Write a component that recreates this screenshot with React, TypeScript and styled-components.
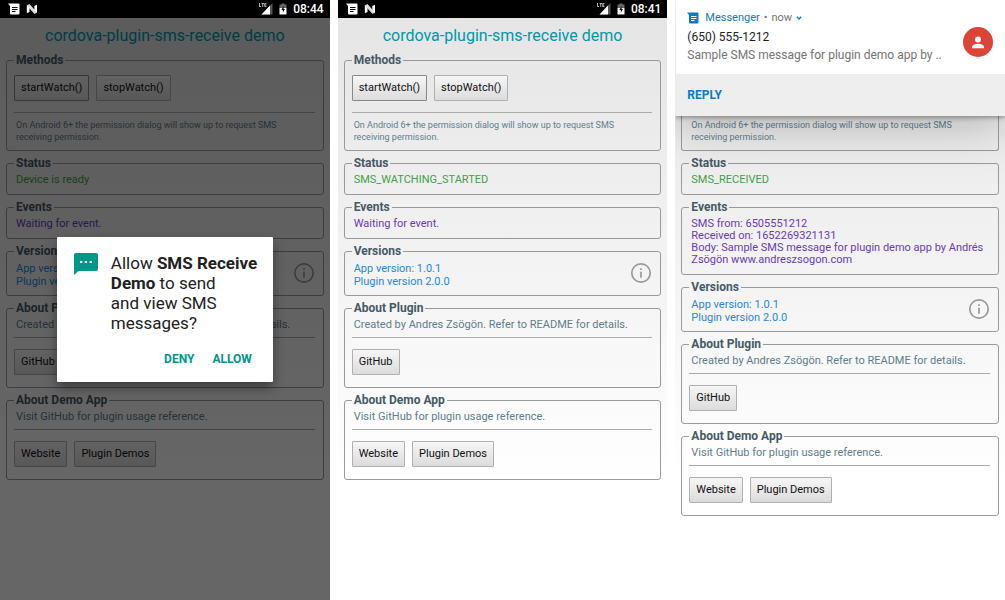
import React from "react";
import styled, { createGlobalStyle } from "styled-components";

const GlobalStyle = createGlobalStyle`
  *, *::before, *::after { box-sizing: border-box; }
  body {
    margin: 0;
    background: #fff;
    font-family: Roboto, "Liberation Sans", sans-serif;
    font-size: 11px;
    line-height: 12px;
  }
`;

const Screens = styled.main`
  display: grid;
  grid-template-columns: repeat(3, minmax(0, 1fr));
  gap: 8px;
  min-height: 100vh;
`;

const Screen = styled.section`
  position: relative;
  display: flex;
  flex-direction: column;
  background: linear-gradient(#e4e4e4, #fff 480px);
`;

const StatusBar = styled.header`
  display: flex;
  align-items: center;
  gap: 6px;
  height: 18px;
  padding: 0 6px 0 8px;
  background: #000;
  color: #fff;
`;

const Clock = styled.time`
  font-size: 12px;
  font-weight: 500;
`;

const Spacer = styled.span`
  flex: 1;
`;

const Content = styled.div`
  position: relative;
  flex: 1;
`;

const Title = styled.h1`
  margin: 0;
  padding: 8px 0;
  color: #0097a7;
  font-size: 16px;
  font-weight: 400;
  line-height: 20px;
  text-align: center;
`;

const Groups = styled.div`
  display: flex;
  flex-direction: column;
  gap: 6px;
  padding: 0 6px;
`;

const Group = styled.fieldset`
  min-width: 0;
  margin: 0;
  padding: 0 8px 0 7px;
  border: 1px solid #999;
  border-radius: 3px;
`;

const OpenGroup = styled(Group)`
  border-top: 0;
  border-radius: 0 0 3px 3px;
`;

const Legend = styled.legend`
  padding: 0 2px;
  color: #455a64;
  font-size: 12px;
  font-weight: 700;
  line-height: 13px;
`;

const Message = styled.p<{ $color: string }>`
  margin: 0;
  padding: 4px 2px 8px;
  color: ${(p) => p.$color};
  white-space: pre-line;
`;

const VersionRow = styled.div`
  display: flex;
  align-items: flex-start;
  justify-content: space-between;
  padding: 4px 0 7px 2px;
  color: #1e88e5;
  line-height: 13px;
`;

const Description = styled.p`
  margin: 0;
  padding: 4px 2px 6px;
  color: #607d8b;
`;

const Note = styled.p<{ $tight?: boolean }>`
  margin: 0;
  padding: ${(p) => (p.$tight ? "3px" : "6px")} 2px 7px;
  color: #607d8b;
  font-size: 9px;
`;

const Rule = styled.hr`
  height: 1px;
  margin: 0;
  border: 0;
  background: #aaa;
`;

const Buttons = styled.div<{ $first?: boolean }>`
  display: flex;
  gap: 7px;
  padding: ${(p) => (p.$first ? "8px 0 11px" : "11px 0 12px")};
`;

const Button = styled.button<{ $active?: boolean }>`
  height: 26px;
  padding: 0 6px;
  border: 1px solid ${(p) => (p.$active ? "#888" : "#b0b0b0")};
  border-radius: 1px;
  background: linear-gradient(#f6f6f6, #dcdcdc);
  color: #111;
  font: 400 11px/16px Roboto, sans-serif;
`;

const Scrim = styled.div`
  position: absolute;
  inset: 0;
  display: flex;
  align-items: center;
  justify-content: center;
  background: rgba(0, 0, 0, 0.6);
`;

const Dialog = styled.div`
  width: 216px;
  padding: 16px 13px 13px 17px;
  border-radius: 1px;
  background: #fff;
  box-shadow: 0 6px 12px rgba(0, 0, 0, 0.4);
`;

const DialogBody = styled.div`
  display: flex;
  align-items: flex-start;
  gap: 13px;
`;

const DialogText = styled.p`
  margin: 0;
  color: #212121;
  font-size: 17px;
  line-height: 20px;
  white-space: nowrap;
`;

const DialogActions = styled.div`
  display: flex;
  justify-content: flex-end;
  gap: 2px;
  padding-top: 16px;
`;

const FlatButton = styled.button`
  padding: 0 8px;
  border: 0;
  background: none;
  color: #009688;
  font: 700 12px/20px Roboto, sans-serif;
`;

const Notification = styled.aside`
  position: relative;
  z-index: 1;
  background: #fff;
  box-shadow: 0 2px 4px rgba(0, 0, 0, 0.3), 0 8px 50px rgba(0, 0, 0, 0.25);
  clip-path: inset(0 0 -80px 0);
`;

const NotificationBody = styled.div`
  display: flex;
  align-items: center;
  justify-content: space-between;
  height: 74px;
  padding: 10px 12px 0;
`;

const NotificationText = styled.div`
  align-self: flex-start;
`;

const Source = styled.div`
  display: flex;
  align-items: center;
  gap: 4px;
  height: 16px;
  color: #757575;
`;

const AppName = styled.span`
  padding-left: 2px;
  color: #0a7cc4;
`;

const Sender = styled.h2`
  margin: 0;
  padding-top: 2px;
  color: #212121;
  font-size: 12px;
  font-weight: 400;
  line-height: 18px;
`;

const Preview = styled.p`
  margin: 0;
  color: #757575;
  font-size: 12px;
  line-height: 18px;
  white-space: nowrap;
`;

const ReplyBar = styled.div`
  display: flex;
  align-items: center;
  height: 42px;
  padding: 0 12px;
  background: #eee;
`;

const Reply = styled.button`
  padding: 0;
  border: 0;
  background: none;
  color: #0a7cc4;
  font: 700 12px/20px Roboto, sans-serif;
`;

const MessengerIcon = ({ color, lines }: { color: string; lines: string }) => (
  <svg width="12" height="12" viewBox="0 0 12 12" aria-hidden="true">
    <path d="M0 .5h10.500a1 1 0 0 1 1 1v9a1 1 0 0 1-1 1H3a1 1 0 0 1-1-1V3z" fill={color} />
    <path d="M4 4.500h5.500M4 6.500h5.500M4 8.500h3.500" stroke={lines} strokeWidth="1" />
  </svg>
);

const NougatIcon = () => (
  <svg width="12" height="10" viewBox="0 0 12 10" aria-hidden="true">
    <path d="M.8 9.300V1.500H3.500V8z" fill="#fff" />
    <path d="M8.300 2L11 .7V8.500H8.300z" fill="#fff" />
    <path d="M.8 1.500L3.500 0 11 8.500 8.500 10z" fill="#ddd" />
  </svg>
);

const SignalIcon = () => (
  <svg width="14" height="12" viewBox="0 0 14 12" aria-hidden="true">
    <path d="M13.500 0v11.500H2.500z" fill="#555" />
    <path d="M11 2.600v8.900H2.500z" fill="#fff" />
    <path d="M.5 0v3.500H2M2.500.5h2.500M3.750.5v3.500M7.500.5H5.750v3H7.500M5.750 2h1.500" stroke="#ddd" strokeWidth=".8" fill="none" />
  </svg>
);

const BatteryIcon = () => (
  <svg width="8" height="12" viewBox="0 0 8 12" aria-hidden="true">
    <path d="M.5 1.500h2V.5h3v1h2V5h-7z" fill="#666" />
    <path d="M.5 5h7v6.500h-7z" fill="#fff" />
    <path d="M4.600 3L2.400 7h1.500v2.600L5.900 6H4.600z" fill="#000" />
  </svg>
);

const InfoIcon = () => (
  <svg width="22" height="22" viewBox="0 0 22 22" role="img" aria-label="Info">
    <circle cx="11" cy="11" r="9.200" fill="none" stroke="#999" strokeWidth="1.700" />
    <path d="M11 9.800v6M11 6.200v1.800" stroke="#999" strokeWidth="1.700" />
  </svg>
);

const SmsIcon = () => (
  <svg width="24" height="24" viewBox="0 0 24 24" aria-hidden="true">
    <path d="M2 0h20a2 2 0 0 1 2 2v14a2 2 0 0 1-2 2H4.500L0 22V2a2 2 0 0 1 2-2z" fill="#009688" />
    <path d="M6 8h2.300v2H6zM10.800 8h2.300v2h-2.300zM15.600 8h2.300v2h-2.300z" fill="#fff" />
  </svg>
);

const Avatar = () => (
  <svg width="30" height="30" viewBox="0 0 30 30" aria-hidden="true">
    <circle cx="15" cy="15" r="15" fill="#db4437" />
    <circle cx="15" cy="12.500" r="3" fill="#fff" />
    <path d="M9 21.300v-1.500c0-2 4-3.100 6-3.100s6 1.100 6 3.100v1.500z" fill="#fff" />
  </svg>
);

const Chevron = () => (
  <svg width="6" height="6" viewBox="0 0 6 6" aria-hidden="true">
    <path d="M.8 1.800L3 4l2.200-2.200" stroke="#0a7cc4" strokeWidth="1.300" fill="none" />
  </svg>
);

const note = "On Android 6+ the permission dialog will show up to request SMS receiving permission.";

const SystemBar = ({ time }: { time: string }) => (
  <StatusBar>
    <MessengerIcon color="#fff" lines="#000" />
    <NougatIcon />
    <Spacer />
    <SignalIcon />
    <BatteryIcon />
    <Clock>{time}</Clock>
  </StatusBar>
);

const Methods = () => (
  <Group>
    <Legend>Methods</Legend>
    <Buttons $first>
      <Button $active>startWatch()</Button>
      <Button>stopWatch()</Button>
    </Buttons>
    <Rule />
    <Note>{note}</Note>
  </Group>
);

const Details = ({ status, event }: { status: string; event: string }) => (
  <>
    <Group>
      <Legend>Status</Legend>
      <Message $color="#43a047">{status}</Message>
    </Group>
    <Group>
      <Legend>Events</Legend>
      <Message $color="#673ab7">{event}</Message>
    </Group>
    <Group>
      <Legend>Versions</Legend>
      <VersionRow>
        <span>
          App version: 1.0.1
          <br />
          Plugin version 2.0.0
        </span>
        <InfoIcon />
      </VersionRow>
    </Group>
    <Group>
      <Legend>About Plugin</Legend>
      <Description>Created by Andres Zsögön. Refer to README for details.</Description>
      <Rule />
      <Buttons>
        <Button>GitHub</Button>
      </Buttons>
    </Group>
    <Group>
      <Legend>About Demo App</Legend>
      <Description>Visit GitHub for plugin usage reference.</Description>
      <Rule />
      <Buttons>
        <Button>Website</Button>
        <Button>Plugin Demos</Button>
      </Buttons>
    </Group>
  </>
);

export default function App() {
  return (
    <>
      <GlobalStyle />
      <Screens>
        <Screen>
          <SystemBar time="08:44" />
          <Content>
            <Title>cordova-plugin-sms-receive demo</Title>
            <Groups>
              <Methods />
              <Details status="Device is ready" event="Waiting for event." />
            </Groups>
            <Scrim>
              <Dialog role="dialog" aria-label="SMS permission">
                <DialogBody>
                  <SmsIcon />
                  <DialogText>
                    Allow <b>SMS Receive</b>
                    <br />
                    <b>Demo</b> to send
                    <br />
                    and view SMS
                    <br />
                    messages?
                  </DialogText>
                </DialogBody>
                <DialogActions>
                  <FlatButton>DENY</FlatButton>
                  <FlatButton>ALLOW</FlatButton>
                </DialogActions>
              </Dialog>
            </Scrim>
          </Content>
        </Screen>

        <Screen>
          <SystemBar time="08:41" />
          <Content>
            <Title>cordova-plugin-sms-receive demo</Title>
            <Groups>
              <Methods />
              <Details status="SMS_WATCHING_STARTED" event="Waiting for event." />
            </Groups>
          </Content>
        </Screen>

        <Screen>
          <Notification>
            <NotificationBody>
              <NotificationText>
                <Source>
                  <MessengerIcon color="#0a7cc4" lines="#fff" />
                  <AppName>Messenger</AppName>
                  <span>•</span>
                  <span>now</span>
                  <Chevron />
                </Source>
                <Sender>(650) 555-1212</Sender>
                <Preview>Sample SMS message for plugin demo app by ..</Preview>
              </NotificationText>
              <Avatar />
            </NotificationBody>
            <ReplyBar>
              <Reply>REPLY</Reply>
            </ReplyBar>
          </Notification>
          <Content>
            <Groups>
              <OpenGroup>
                <Note $tight>{note}</Note>
              </OpenGroup>
              <Details
                status="SMS_RECEIVED"
                event={
                  "SMS from: 6505551212\nReceived on: 1652269321131\nBody: Sample SMS message for plugin demo app by Andrés Zsögön www.andreszsogon.com"
                }
              />
            </Groups>
          </Content>
        </Screen>
      </Screens>
    </>
  );
}
